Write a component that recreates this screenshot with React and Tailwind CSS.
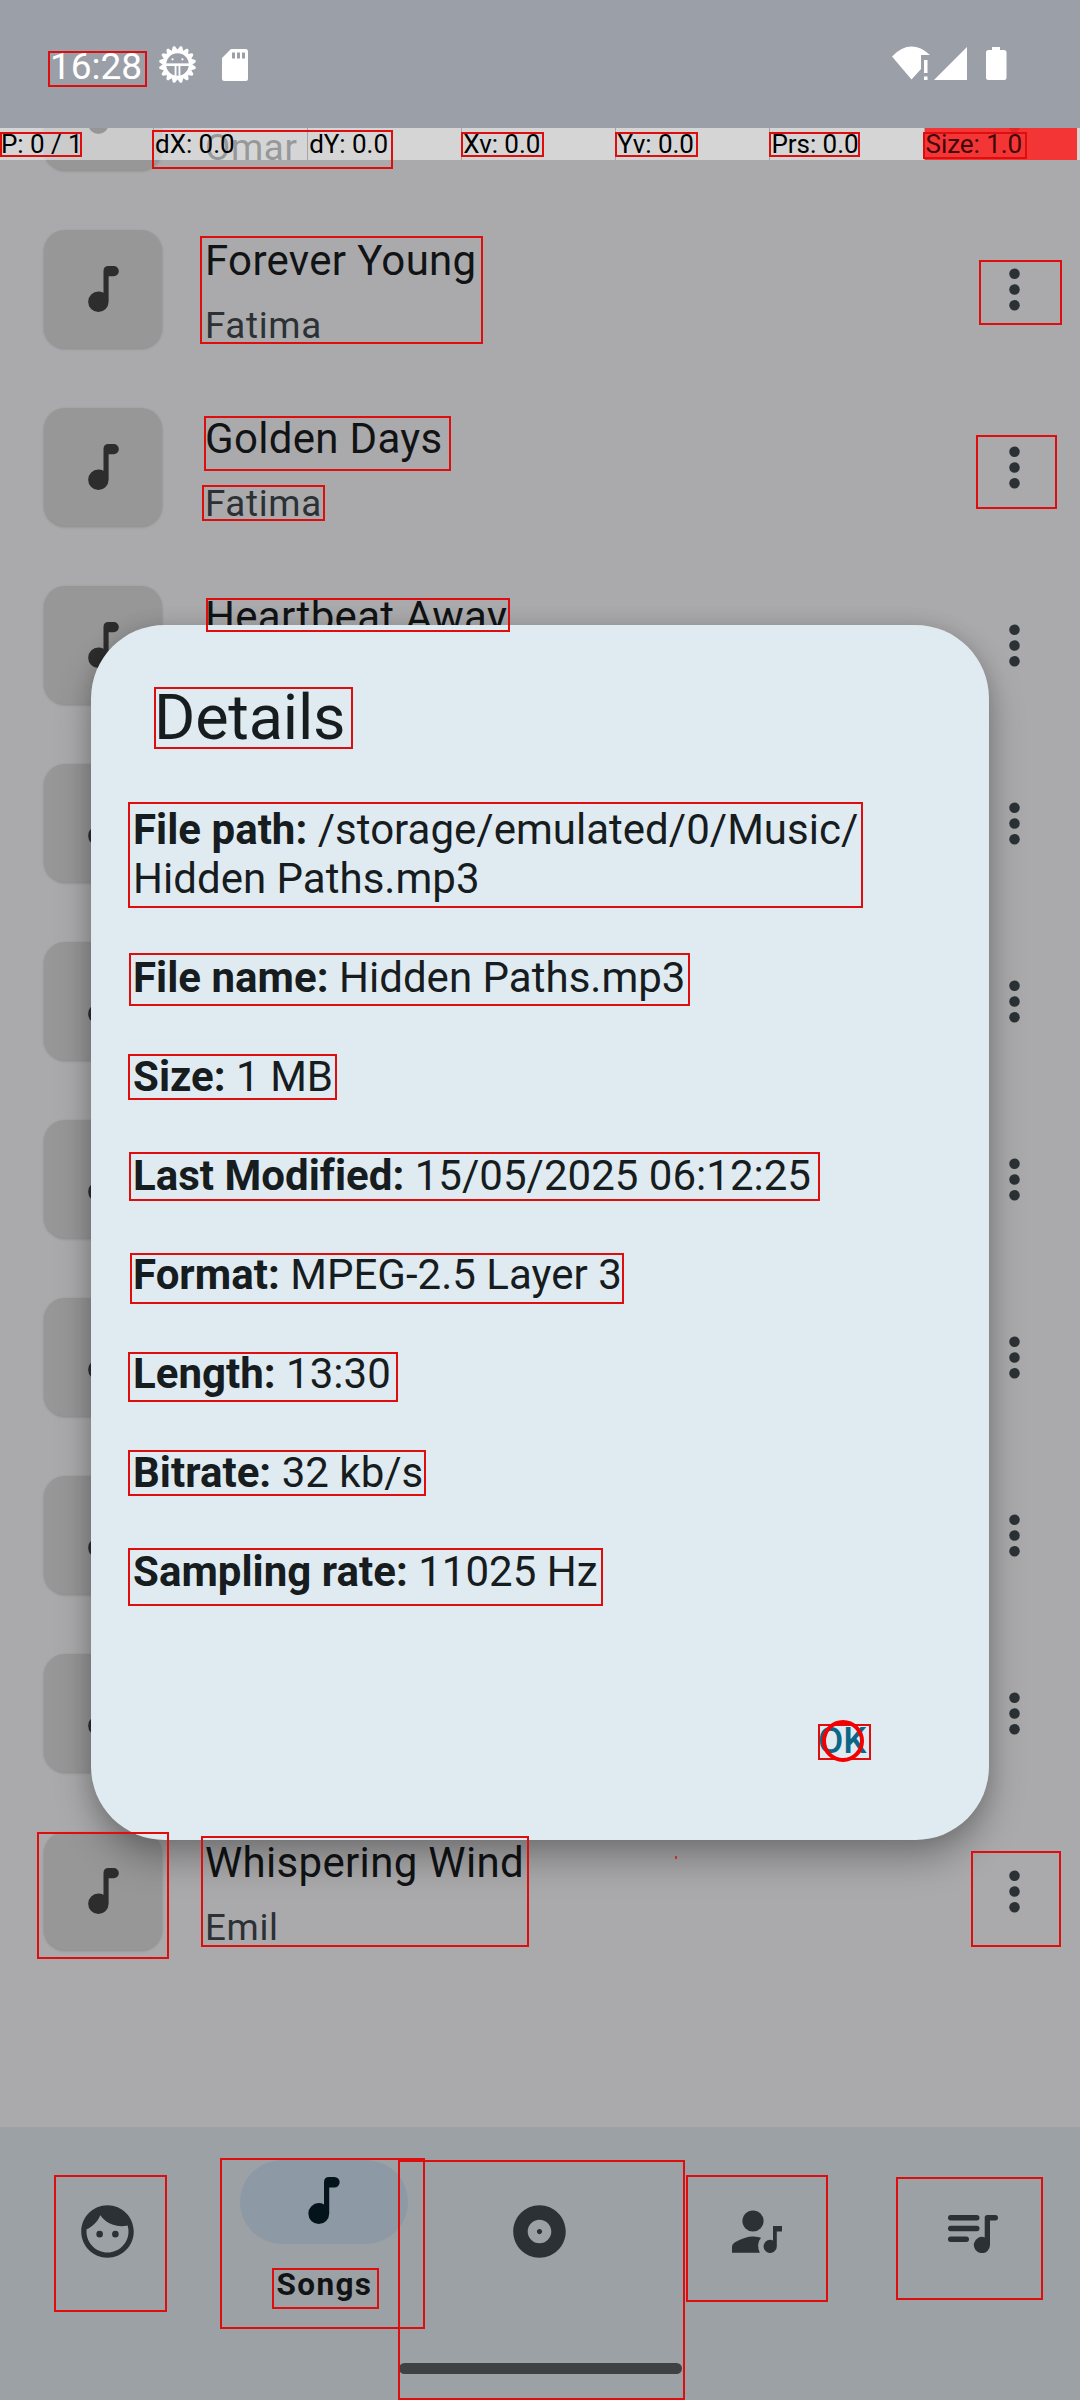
import React from "react";
import { MdFace, MdAlbum } from "react-icons/md";

const tracks = [
  { artist: "Omar" },
  { title: "Forever Young", artist: "Fatima" },
  { title: "Golden Days", artist: "Fatima" },
  { title: "Heartbeat Away" },
  {}, {}, {}, {}, {}, {},
  { title: "Whispering Wind", artist: "Emil" },
];

const details = [
  ["File path:", "/storage/emulated/0/Music/ Hidden Paths.mp3"],
  ["File name:", "Hidden Paths.mp3"],
  ["Size:", "1 MB"],
  ["Last Modified:", "15/05/2025 06:12:25"],
  ["Format:", "MPEG-2.5 Layer 3"],
  ["Length:", "13:30"],
  ["Bitrate:", "32 kb/s"],
  ["Sampling rate:", "11025 Hz"],
];

const pointerCells = ["P: 0 / 1", "dX: 0.0", "dY: 0.0", "Xv: 0.0", "Yv: 0.0", "Prs: 0.0"];

// Highlighted regions as [left, top, right, bottom].
const regions = [
  [48, 51, 147, 87],
  [0, 132, 82, 157],
  [152, 130, 393, 169],
  [461, 132, 544, 157],
  [615, 132, 698, 157],
  [769, 132, 860, 157],
  [923, 132, 1027, 159],
  [200, 236, 483, 344],
  [979, 260, 1062, 325],
  [204, 416, 451, 471],
  [202, 485, 325, 521],
  [976, 435, 1057, 509],
  [206, 598, 510, 632],
  [154, 687, 353, 749],
  [128, 802, 863, 908],
  [129, 953, 690, 1006],
  [128, 1054, 337, 1100],
  [129, 1152, 820, 1201],
  [130, 1253, 624, 1304],
  [128, 1352, 398, 1402],
  [128, 1450, 426, 1496],
  [128, 1548, 603, 1606],
  [818, 1724, 871, 1760],
  [37, 1832, 169, 1959],
  [201, 1836, 529, 1947],
  [971, 1851, 1061, 1947],
  [54, 2175, 167, 2312],
  [220, 2158, 425, 2329],
  [272, 2268, 379, 2309],
  [398, 2160, 685, 2400],
  [686, 2175, 828, 2302],
  [896, 2177, 1043, 2300],
];

function Note({ className }) {
  return (
    <svg viewBox="0 0 480 720" className={className} fill="currentColor">
      <path d="M160 720a160 160 0 1 1 0-320q42 0 80 20V80q0-80 80-80h80a80 80 0 0 1 0 160h-80v400a160 160 0 0 1-160 160Z" />
    </svg>
  );
}

function Dots() {
  return (
    <svg viewBox="0 0 24 24" className="h-[63px] w-[63px] text-[#2c3135]" fill="currentColor">
      <circle cx="12" cy="6" r="2" />
      <circle cx="12" cy="12" r="2" />
      <circle cx="12" cy="18" r="2" />
    </svg>
  );
}

function DebugIcon() {
  const teeth = Array.from({ length: 16 }, (_, i) => i * 22.5 + 11.25);
  return (
    <svg viewBox="-18 -18 36 36" className="h-[37px] w-[37px]">
      {teeth.map((a) => (
        <path key={a} d="M-3.2 -13.5L-1 -18H1L3.2 -13.5Z" fill="white" transform={`rotate(${a})`} />
      ))}
      <circle r="12.6" fill="none" stroke="white" strokeWidth="3.2" />
      <path d="M-12 0.2H12" stroke="white" strokeWidth="2.6" />
      <path d="M-1.9 1V12.5M1.9 1V12.5" stroke="white" strokeWidth="1.8" />
      <circle cx="-4.8" cy="-5" r="1.1" fill="white" />
      <circle cx="4.8" cy="-5" r="1.1" fill="white" />
    </svg>
  );
}

function StatusBar() {
  return (
    <header className="relative z-10 flex h-[128px] shrink-0 items-start bg-[#9ba0a8] text-white">
      <span className="ml-[50px] mt-[45px] w-[109px] text-[37px] leading-[43px]">16:28</span>
      <span className="mt-[46px]"><DebugIcon /></span>
      <svg viewBox="0 0 26 32" className="ml-[26px] mt-[49px] h-[32px] w-[26px]">
        <path d="M9 0H23.5Q26 0 26 2.5V29.5Q26 32 23.5 32H2.5Q0 32 0 29.5V9Z" fill="white" />
        <path d="M10 3.5h3v6h-3zM15 3.5h3v6h-3zM20 3.5h3v6h-3z" fill="#9ba0a8" />
      </svg>
      <svg viewBox="0 0 116 34" className="ml-auto mr-[73px] mt-[46px] h-[34px] w-[116px]" fill="white">
        <path d="M1 10.5Q19.5 -8.5 39 9H30V23L20.5 33.5Z" />
        <path d="M33 14h3.5v13H33zM33 30.5h3.5v3.5H33z" />
        <path d="M43 34L76 1V34Z" />
        <path d="M101 1h8v3h4q2.500 0 2.500 2.500V31.500q0 2.500-2.500 2.500H97.500q-2.500 0-2.500-2.500V6.500Q95 4 97.500 4H101Z" />
      </svg>
    </header>
  );
}

function PointerBar() {
  return (
    <div className="absolute inset-x-0 top-[128px] z-20 flex h-[32px] bg-white/50 text-[26px] leading-[33px] text-black">
      {pointerCells.map((t) => (
        <div key={t} className="w-[154.1px] shrink-0 whitespace-pre border-r border-[#a3a5a8] pl-px tracking-[-0.05px]">{t}</div>
      ))}
      <div className="w-[152.4px] whitespace-pre bg-[#ff0000]/75 pl-px tracking-[-0.05px] text-[#400808]">Size: 1.0</div>
    </div>
  );
}

function TrackRow({ title, artist }) {
  return (
    <div className="flex h-[178px] shrink-0 items-start pl-[44px]">
      <div className="mt-[29.5px] flex h-[118px] w-[118px] shrink-0 items-center justify-center rounded-[21px] bg-[#979797] shadow-[0_1px_3px_rgba(0,0,0,0.2)]">
        <Note className="h-[46px] w-[31px] text-[#2d2d2d]" />
      </div>
      <div className="ml-[43px] mt-[36px] flex grow flex-col gap-[19px]">
        <div className="h-[49px] text-[42px] leading-[49px] tracking-[0.32px] text-[#111315]">{title}</div>
        <div className="h-[43px] text-[36.75px] leading-[43px] tracking-[0.65px] text-[#2c3135]">{artist}</div>
      </div>
      <div className="mr-[34px] mt-[58px]"><Dots /></div>
    </div>
  );
}

function DetailsDialog() {
  return (
    <section className="absolute left-[91px] top-[625px] z-20 flex h-[1215px] w-[898px] flex-col rounded-[73.5px] bg-[#e0ebf1] text-[#171c1f] shadow-[0_20px_36px_rgba(0,0,0,0.28),0_0_20px_rgba(0,0,0,0.12)]">
      <h1 className="ml-[63px] mt-[56px] text-[63px] leading-[74px] tracking-[-0.2px]">Details</h1>
      <div className="ml-[42px] mt-[50px] flex w-[760px] flex-col gap-[49.5px] text-[42px] leading-[49.4px] tracking-[0.02px]">
        {details.map(([label, value]) => (
          <p key={label}><b className="font-bold">{label}</b> {value}</p>
        ))}
      </div>
      <button className="ml-[727px] mt-[123px] self-start text-[36.75px] font-medium leading-[43px] text-[#0b6687]">OK</button>
    </section>
  );
}

function ArtistIcon() {
  return (
    <svg viewBox="0 0 50 43" className="h-[43px] w-[50px]" fill="currentColor">
      <circle cx="21" cy="11" r="10.6" />
      <path d="M0 42.8V36.5Q0 34 3 32.2Q14 26 22 26.5Q26 26.7 29 27.8Q24 34 27.8 42.8Z" />
      <path d="M41 16H50V21.6H44.8V36.3A6.6 6.6 0 1 1 41 30.4Z" />
    </svg>
  );
}

function PlaylistIcon() {
  return (
    <svg viewBox="0 0 50 38" className="h-[38px] w-[50px]" fill="currentColor">
      <rect width="31.5" height="5.4" rx="2.7" />
      <rect y="10.8" width="31.5" height="5.4" rx="2.7" />
      <rect y="21.5" width="21" height="5.4" rx="2.7" />
      <path d="M36.7 22.4V2.6Q36.7 0 39.3 0H47.3A2.7 2.7 0 0 1 47.3 5.4H42V29.7A8.1 8.1 0 1 1 36.7 22.4Z" />
    </svg>
  );
}

function NavBar() {
  return (
    <nav className="relative grid h-[273px] shrink-0 grid-cols-5 bg-[#9ca1a5] text-[#2c3135]">
      <div className="flex justify-center pr-px pt-[73px]"><MdFace className="h-[63px] w-[63px]" /></div>
      <div className="flex flex-col items-center pt-[33px]">
        <div className="flex h-[84px] w-[168px] items-center justify-center rounded-full bg-[#8d99a4]">
          <Note className="mt-[-3px] h-[47px] w-[32px] text-[#04141b]" />
        </div>
        <span className="mt-[22px] pl-px text-[31.5px] font-bold leading-[37px] tracking-[1.35px] text-[#111315]">Songs</span>
      </div>
      <div className="flex justify-center pr-px pt-[73px]"><MdAlbum className="h-[63px] w-[63px]" /></div>
      <div className="flex justify-center pl-[2px] pt-[83px]"><ArtistIcon /></div>
      <div className="flex justify-center pl-[2px] pt-[88px]"><PlaylistIcon /></div>
      <div className="absolute bottom-[26px] left-[399px] h-[11px] w-[283px] rounded-full bg-[#3f4143]" />
    </nav>
  );
}

export default function App() {
  return (
    <div className="relative flex h-[2400px] w-[1080px] flex-col overflow-hidden bg-[#aaaaac] font-['Roboto',sans-serif]">
      <StatusBar />
      <main className="flex grow flex-col overflow-hidden">
        <div className="mt-[-106px] flex flex-col">
          {tracks.map((t, i) => <TrackRow key={i} {...t} />)}
        </div>
      </main>
      <NavBar />
      <PointerBar />
      <DetailsDialog />
      <div className="pointer-events-none absolute inset-0 z-30">
        {regions.map(([l, t, r, b]) => (
          <div key={`${l}-${t}`} className="absolute border-2 border-[#df0e0e]" style={{ left: l, top: t, width: r - l, height: b - t }} />
        ))}
        <div className="absolute left-[822px] top-[1720px] h-[42px] w-[42px] rounded-full border-4 border-[#f50000]" />
        <div className="absolute left-[675px] top-[1856px] h-[3px] w-[2px] bg-[#c03030]" />
      </div>
    </div>
  );
}
